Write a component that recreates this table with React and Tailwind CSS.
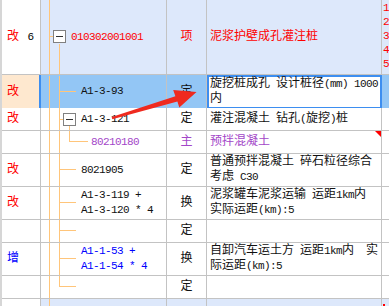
import React from "react";

const CJK = /([\u3000-\u303f\u3400-\u9fff\uff00-\uffef]+)/;

// cjk runs get 12px, latin stays mono at 6px advance (half width like the original)
function T({ s }) {
  return s
    .split(CJK)
    .map((p, i) =>
      CJK.test(p) ? (
        <span key={i} className="text-[12px] tracking-normal">
          {p}
        </span>
      ) : (
        p
      )
    );
}

const LINE = "#ffc57a";

function Gutter({ kind, h, w }) {
  return (
    <svg width={w} height={h} className="shrink-0 block">
      <line x1="8.5" y1="0" x2="8.5" y2={h} stroke={LINE} />
      {kind === "root" && (
        <>
          <line x1="8" y1="36.5" x2="12" y2="36.5" stroke={LINE} />
          <line x1="18.5" y1="44" x2="18.5" y2={h} stroke={LINE} />
          <rect x="12.5" y="30.5" width="12" height="12" fill="#fff" stroke="#808080" />
          <line x1="15" y1="36.5" x2="22" y2="36.5" stroke="#333" />
        </>
      )}
      {kind === "stub" && (
        <>
          <line x1="18.5" y1="0" x2="18.5" y2={h} stroke={LINE} />
          <line x1="18" y1={h > 25 ? 15.5 : 10.5} x2="35" y2={h > 25 ? 15.5 : 10.5} stroke={LINE} />
        </>
      )}
      {kind === "last" && (
        <>
          <line x1="18.5" y1="0" x2="18.5" y2="10.5" stroke={LINE} />
          <line x1="18" y1="10.5" x2="35" y2="10.5" stroke={LINE} />
        </>
      )}
      {kind === "node" && (
        <>
          <line x1="18.5" y1="0" x2="18.5" y2={h} stroke={LINE} />
          <line x1="18" y1="11.5" x2="22" y2="11.5" stroke={LINE} />
          <line x1="28.5" y1="17" x2="28.5" y2={h} stroke={LINE} />
          <rect x="22.5" y="5.5" width="12" height="12" fill="#fff" stroke="#808080" />
          <line x1="25" y1="11.5" x2="32" y2="11.5" stroke="#333" />
        </>
      )}
      {kind === "child" && (
        <>
          <line x1="18.5" y1="0" x2="18.5" y2={h} stroke={LINE} />
          <line x1="28.5" y1="0" x2="28.5" y2="10.5" stroke={LINE} />
          <line x1="28" y1="10.5" x2="47" y2="10.5" stroke={LINE} />
        </>
      )}
    </svg>
  );
}

const RED = "text-[#ff0000]";
const PURPLE = "text-[#a346c8]";
const BLUE = "text-[#0000ff]";

const rows = [
  {
    h: 75,
    mark: "改",
    num: "6",
    bg: "bg-[#dde8fb]",
    tree: "root",
    gw: 30,
    code: ["010302001001"],
    codeC: RED,
    type: "项",
    typeC: RED,
    name: ["泥浆护壁成孔灌注桩"],
    nameC: RED,
    nums: true,
  },
  { h: 33, mark: "改", selected: true, tree: "stub", gw: 40, code: ["A1-3-93"], type: "定", name: ["旋挖桩成孔 设计桩径(mm) 1000", "内"] },
  { h: 23, mark: "改", tree: "node", gw: 40, code: ["A1-3-121"], type: "定", name: ["灌注混凝土 钻孔(旋挖)桩"] },
  { h: 23, tree: "child", gw: 50, code: ["80210180"], codeC: PURPLE, type: "主", typeC: PURPLE, name: ["预拌混凝土"], nameC: PURPLE, corner: true },
  { h: 33, mark: "改", tree: "stub", gw: 40, code: ["8021905"], type: "定", name: ["普通预拌混凝土 碎石粒径综合", "考虑 C30"] },
  { h: 33, mark: "改", tree: "stub", gw: 40, code: ["A1-3-119 +", "A1-3-120 * 4"], type: "换", name: ["泥浆罐车泥浆运输 运距1km内", "实际运距(km):5"] },
  { h: 23, tree: "stub", gw: 40, code: [], type: "定", name: [] },
  { h: 33, mark: "增", markC: BLUE, tree: "stub", gw: 40, code: ["A1-1-53 +", "A1-1-54 * 4"], codeC: BLUE, type: "换", name: ["自卸汽车运土方 运距1km内  实", "际运距(km):5"] },
  { h: 23, tree: "last", gw: 40, code: [], type: "定", name: [] },
];

function Lines({ lines, cls = "" }) {
  return (
    <div className={`flex flex-col leading-[15px] ${cls}`}>
      {lines.map((l, i) => (
        <div key={i} className="whitespace-pre">
          <T s={l} />
        </div>
      ))}
    </div>
  );
}

function Row({ r }) {
  const grid = "border-[#c3c3c3]";
  const inner = r.h - 1;
  const bg = r.selected ? "bg-[#93c6f5]" : r.bg || "bg-white";
  return (
    <div className="grid grid-cols-[39px_126px_40px_175px_7px]" style={{ height: r.h }}>
      <div
        className={`flex items-center gap-[9px] pl-[5px] border-b ${grid} ${
          r.selected ? "bg-[#fee8cf] border-r-2 border-r-[#3d8ef0]" : "bg-white border-r"
        }`}
      >
        {r.mark && <span className={`text-[12px] ${r.markC || RED}`}>{r.mark}</span>}
        {r.num && <span className="text-black">{r.num}</span>}
      </div>
      <div className={`flex items-center border-r border-b ${grid} ${bg} ${r.codeC || "text-[#111]"}`}>
        <Gutter kind={r.tree} h={inner} w={r.gw} />
        <Lines lines={r.code} />
      </div>
      <div className={`flex items-center justify-center border-r border-b ${grid} ${bg} ${r.typeC || "text-[#111]"}`}>
        <span className="text-[12px] tracking-normal">{r.type}</span>
      </div>
      {r.selected ? (
        <div className="flex items-center pl-[1px] border-2 border-[#3d8ef0] bg-white text-[#111]">
          <Lines lines={r.name} />
        </div>
      ) : (
        <div className={`relative flex items-center pl-[3px] border-r border-b ${grid} ${bg} ${r.nameC || "text-[#111]"}`}>
          <Lines lines={r.name} />
          {r.corner && (
            <svg width="6" height="6" className="absolute top-0 right-0">
              <polygon points="0,0 6,0 6,6" fill="#ff0000" />
            </svg>
          )}
        </div>
      )}
      <div className={`overflow-hidden border-b ${grid} ${bg}`}>
        {r.nums && (
          <div className="flex flex-col pt-[1px] pl-[1px] leading-[14px] text-[#ff0000]">
            {["1", "2", "3", "4", "5"].map((n) => (
              <span key={n}>{n}</span>
            ))}
          </div>
        )}
      </div>
    </div>
  );
}

export default function App() {
  return (
    <div className="relative w-[389px] h-[306px] overflow-hidden bg-white border-l-2 border-[#d6d6d6] text-[11px] tracking-[-0.6px] font-['Liberation_Mono','Noto_Sans_CJK_SC',monospace]">
      {rows.map((r, i) => (
        <Row key={i} r={r} />
      ))}
      <div className="grid grid-cols-[39px_126px_40px_175px_7px] h-[20px]">
        <div className="bg-white border-r border-[#c3c3c3]" />
        <div className="flex border-r border-[#c3c3c3] bg-[#dde8fb]">
          <Gutter kind="none" h={20} w={20} />
        </div>
        <div className="border-r border-[#c3c3c3] bg-[#dde8fb]" />
        <div className="border-r border-[#c3c3c3] bg-[#dde8fb]" />
        <div className="bg-[#dde8fb] pl-[1px] pt-[5px]">
          <div className="w-[2px] h-[3px] bg-[#ff0000]" />
        </div>
      </div>
      <svg width="389" height="306" className="absolute top-0 left-[-2px] pointer-events-none">
        <polygon
          points="111.7,117 175.4,96.2 173.2,90 196.5,92 179.3,107.4 177.4,101.6 112.3,119.2"
          fill="#ef2a1f"
        />
      </svg>
    </div>
  );
}
